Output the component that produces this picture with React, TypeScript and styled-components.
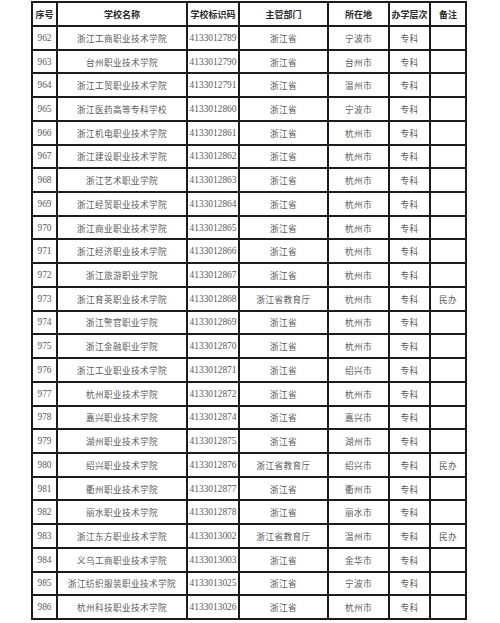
import React from 'react';
import styled, { createGlobalStyle } from 'styled-components';

const GlobalStyle = createGlobalStyle`
  html, body {
    margin: 0;
    padding: 0;
    background: #ffffff;
  }
  body {
    width: 500px;
    height: 623px;
    overflow: hidden;
    font-family: "Liberation Serif", "Noto Sans CJK SC", serif;
  }
`;

const Page = styled.div`
  padding: 1px 0 0 31px;
`;

const Table = styled.table`
  width: 434px;
  table-layout: fixed;
  border-collapse: collapse;
  border: 2px solid #1c1c1c;
`;

const HeadCell = styled.th`
  height: 22px;
  padding: 0;
  border: 2px solid #1c1c1c;
  font-family: "Noto Sans CJK SC", sans-serif;
  font-size: 9px;
  font-weight: 700;
  color: #2a2a2a;
  text-align: center;
  white-space: nowrap;
  overflow: hidden;
`;

const Row = styled.tr`
  height: 23.72px;
`;

const Cell = styled.td<{ $mono?: boolean }>`
  padding: 0;
  border: 2px solid #1c1c1c;
  font-family: ${({ $mono }) =>
    $mono ? '"Liberation Serif", serif' : '"Noto Sans CJK SC", sans-serif'};
  font-size: ${({ $mono }) => ($mono ? '9.4px' : '8.6px')};
  font-weight: 400;
  letter-spacing: ${({ $mono }) => ($mono ? '0' : '0.4px')};
  color: #5a5a5a;
  text-align: center;
  white-space: nowrap;
  overflow: hidden;
`;

type School = [number, string, string, string, string, string, string];

const columns = [
  { label: '序号', width: 25 },
  { label: '学校名称', width: 130 },
  { label: '学校标识码', width: 52 },
  { label: '主管部门', width: 89 },
  { label: '所在地', width: 61 },
  { label: '办学层次', width: 41 },
  { label: '备注', width: 36 },
];

const schools: School[] = [
  [962, '浙江工商职业技术学院', '4133012789', '浙江省', '宁波市', '专科', ''],
  [963, '台州职业技术学院', '4133012790', '浙江省', '台州市', '专科', ''],
  [964, '浙江工贸职业技术学院', '4133012791', '浙江省', '温州市', '专科', ''],
  [965, '浙江医药高等专科学校', '4133012860', '浙江省', '宁波市', '专科', ''],
  [966, '浙江机电职业技术学院', '4133012861', '浙江省', '杭州市', '专科', ''],
  [967, '浙江建设职业技术学院', '4133012862', '浙江省', '杭州市', '专科', ''],
  [968, '浙江艺术职业学院', '4133012863', '浙江省', '杭州市', '专科', ''],
  [969, '浙江经贸职业技术学院', '4133012864', '浙江省', '杭州市', '专科', ''],
  [970, '浙江商业职业技术学院', '4133012865', '浙江省', '杭州市', '专科', ''],
  [971, '浙江经济职业技术学院', '4133012866', '浙江省', '杭州市', '专科', ''],
  [972, '浙江旅游职业学院', '4133012867', '浙江省', '杭州市', '专科', ''],
  [973, '浙江育英职业技术学院', '4133012868', '浙江省教育厅', '杭州市', '专科', '民办'],
  [974, '浙江警官职业学院', '4133012869', '浙江省', '杭州市', '专科', ''],
  [975, '浙江金融职业学院', '4133012870', '浙江省', '杭州市', '专科', ''],
  [976, '浙江工业职业技术学院', '4133012871', '浙江省', '绍兴市', '专科', ''],
  [977, '杭州职业技术学院', '4133012872', '浙江省', '杭州市', '专科', ''],
  [978, '嘉兴职业技术学院', '4133012874', '浙江省', '嘉兴市', '专科', ''],
  [979, '湖州职业技术学院', '4133012875', '浙江省', '湖州市', '专科', ''],
  [980, '绍兴职业技术学院', '4133012876', '浙江省教育厅', '绍兴市', '专科', '民办'],
  [981, '衢州职业技术学院', '4133012877', '浙江省', '衢州市', '专科', ''],
  [982, '丽水职业技术学院', '4133012878', '浙江省', '丽水市', '专科', ''],
  [983, '浙江东方职业技术学院', '4133013002', '浙江省教育厅', '温州市', '专科', '民办'],
  [984, '义乌工商职业技术学院', '4133013003', '浙江省', '金华市', '专科', ''],
  [985, '浙江纺织服装职业技术学院', '4133013025', '浙江省', '宁波市', '专科', ''],
  [986, '杭州科技职业技术学院', '4133013026', '浙江省', '杭州市', '专科', ''],
];

const App: React.FC = () => {
  return (
    <>
      <GlobalStyle />
      <Page>
        <Table>
          <colgroup>
            {columns.map((c) => (
              <col key={c.label} style={{ width: c.width }} />
            ))}
          </colgroup>
          <thead>
            <tr>
              {columns.map((c) => (
                <HeadCell key={c.label}>{c.label}</HeadCell>
              ))}
            </tr>
          </thead>
          <tbody>
            {schools.map(([no, name, code, dept, city, level, note]) => (
              <Row key={no}>
                <Cell $mono>{no}</Cell>
                <Cell>{name}</Cell>
                <Cell $mono>{code}</Cell>
                <Cell>{dept}</Cell>
                <Cell>{city}</Cell>
                <Cell>{level}</Cell>
                <Cell>{note}</Cell>
              </Row>
            ))}
          </tbody>
        </Table>
      </Page>
    </>
  );
};

export default App;
